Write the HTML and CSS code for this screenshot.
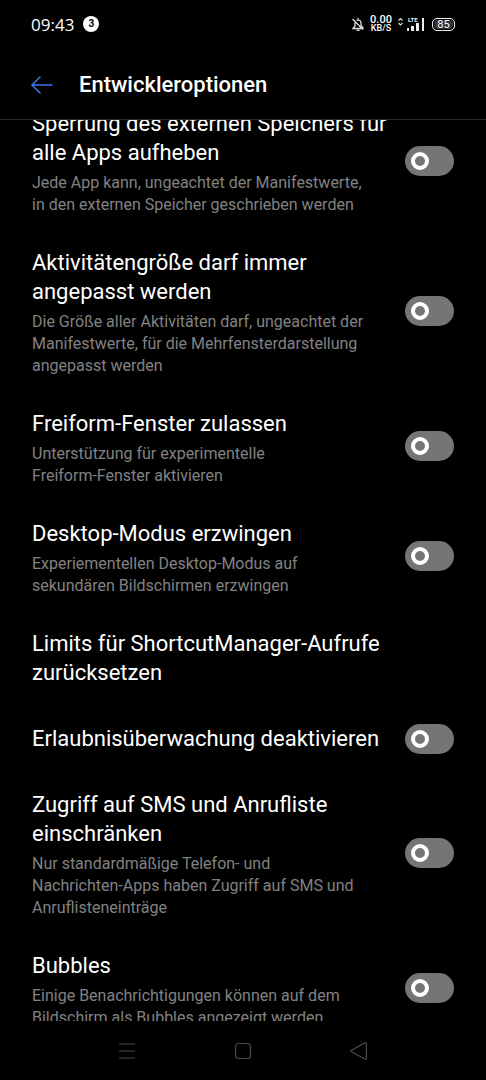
FILE: index.html
```html
<!DOCTYPE html>
<html lang="de">
<head>
    <meta charset="UTF-8">
    <meta name="viewport" content="width=device-width, initial-scale=1.0">
    <title>Entwickleroptionen</title>
    <link rel="stylesheet" href="styles.css">
</head>
<body>
    <div class="status-bar">
        <span class="time">09:43</span>
        <span class="badge">3</span>
        <div class="status-icons">
            <svg class="bell" width="14" height="16" viewBox="0 0 14 16" fill="none" stroke="#ddd" stroke-width="1.3">
                <path d="M7 2v2M4 6.500V10L2 12.500H11M5.500 4.500Q10 3 10 7.500V9.500L12.500 12.500M5.500 14.300h3M1.500 3l10.500 10.500"/>
            </svg>
            <div class="speed">
                <span class="speed-value">0.00</span>
                <span class="speed-unit">KB/S</span>
            </div>
            <svg class="signal" width="28" height="16" viewBox="0 0 28 16" fill="#eee">
                <path d="M1.500 4.500l2-2 2 2M1.500 7l2 2 2-2" fill="none" stroke="#ddd" stroke-width="1.2"/>
                <rect x="10" y="12" width="2" height="3"/>
                <rect x="14" y="10" width="3" height="5"/>
                <rect x="19" y="7" width="3" height="8"/>
                <rect x="25" y="2" width="2" height="13"/>
                <text x="11" y="6" class="lte">LTE</text>
            </svg>
            <span class="battery">85</span>
        </div>
    </div>

    <header class="header">
        <button class="back-button" aria-label="Zurück">
            <svg width="22" height="18" viewBox="0 0 22 18" fill="none" stroke="#3f74e8" stroke-width="1.6" stroke-linecap="round" stroke-linejoin="round">
                <path d="M21 9H1M9 1L1 9l8 8"/>
            </svg>
        </button>
        <h1>Entwickleroptionen</h1>
    </header>

    <main class="content">
        <div class="list">
            <div class="row">
                <label class="text" for="storage">
                    <span class="title">Sperrung des externen Speichers für alle Apps aufheben</span>
                    <span class="desc">Jede App kann, ungeachtet der Manifestwerte,<br>in den externen Speicher geschrieben werden</span>
                </label>
                <input type="checkbox" class="switch" id="storage">
            </div>
            <div class="row">
                <label class="text" for="resize">
                    <span class="title">Aktivitätengröße darf immer angepasst werden</span>
                    <span class="desc">Die Größe aller Aktivitäten darf, ungeachtet der<br>Manifestwerte, für die Mehrfensterdarstellung<br>angepasst werden</span>
                </label>
                <input type="checkbox" class="switch" id="resize">
            </div>
            <div class="row">
                <label class="text" for="freeform">
                    <span class="title">Freiform-Fenster zulassen</span>
                    <span class="desc">Unterstützung für experimentelle<br>Freiform-Fenster aktivieren</span>
                </label>
                <input type="checkbox" class="switch" id="freeform">
            </div>
            <div class="row">
                <label class="text" for="desktop">
                    <span class="title">Desktop-Modus erzwingen</span>
                    <span class="desc">Experiementellen Desktop-Modus auf<br>sekundären Bildschirmen erzwingen</span>
                </label>
                <input type="checkbox" class="switch" id="desktop">
            </div>
            <div class="row">
                <div class="text">
                    <span class="title">Limits für ShortcutManager-Aufrufe<br>zurücksetzen</span>
                </div>
            </div>
            <div class="row">
                <label class="text" for="permission">
                    <span class="title">Erlaubnisüberwachung deaktivieren</span>
                </label>
                <input type="checkbox" class="switch" id="permission">
            </div>
            <div class="row">
                <label class="text" for="sms">
                    <span class="title">Zugriff auf SMS und Anrufliste einschränken</span>
                    <span class="desc">Nur standardmäßige Telefon- und<br>Nachrichten-Apps haben Zugriff auf SMS und<br>Anruflisteneinträge</span>
                </label>
                <input type="checkbox" class="switch" id="sms">
            </div>
            <div class="row">
                <label class="text" for="bubbles">
                    <span class="title">Bubbles</span>
                    <span class="desc">Einige Benachrichtigungen können auf dem<br>Bildschirm als Bubbles angezeigt werden</span>
                </label>
                <input type="checkbox" class="switch" id="bubbles">
            </div>
        </div>
    </main>

    <nav class="nav-bar">
        <button aria-label="Menü">
            <svg width="18" height="18" viewBox="0 0 18 18" fill="none" stroke="#4a4a4a" stroke-width="1.2">
                <path d="M1 2h16M1 9h16M1 16h16"/>
            </svg>
        </button>
        <button aria-label="Startseite">
            <svg width="18" height="18" viewBox="0 0 18 18" fill="none" stroke="#4a4a4a" stroke-width="1.2">
                <rect x="1.500" y="1.500" width="15" height="15" rx="3"/>
            </svg>
        </button>
        <button aria-label="Zurück">
            <svg width="18" height="18" viewBox="0 0 18 18" fill="none" stroke="#4a4a4a" stroke-width="1.2">
                <path d="M14.800 .9Q16.400 0 16.400 1.800V16.200Q16.400 18 14.800 17.100L1.500 9.800Q.2 9 1.500 8.200Z"/>
            </svg>
        </button>
    </nav>
</body>
</html>
```
FILE: styles.css
```css
* {
    box-sizing: border-box;
}

body {
    margin: 0;
    height: 100vh;
    display: flex;
    flex-direction: column;
    background: #000;
    color: #fff;
    font-family: Roboto, sans-serif;
    overflow: hidden;
}

button {
    display: flex;
    padding: 0;
    border: none;
    background: none;
    cursor: pointer;
}

.status-bar {
    display: flex;
    align-items: center;
    height: 48px;
    padding: 0 31px;
    flex-shrink: 0;
}

.time {
    font-family: "Open Sans", sans-serif;
    font-size: 17px;
}

.badge {
    width: 16px;
    height: 16px;
    margin-left: 9px;
    border-radius: 50%;
    background: #fff;
    color: #000;
    font-size: 10px;
    font-weight: bold;
    line-height: 16px;
    text-align: center;
}

.status-icons {
    display: flex;
    align-items: center;
    margin-left: auto;
}

.speed {
    display: flex;
    flex-direction: column;
    align-items: center;
    width: 24px;
    margin: 0 4px;
    font-weight: 500;
}

.speed-value {
    font-size: 11px;
    line-height: 9px;
}

.speed-unit {
    font-size: 9px;
    line-height: 9px;
}

.lte {
    font-size: 6px;
    font-weight: bold;
}

.battery {
    width: 23px;
    height: 13px;
    margin-left: 7px;
    border: 1px solid #eee;
    border-radius: 5px;
    background: #333;
    box-shadow: inset 0 0 0 1px #000;
    font-size: 11px;
    line-height: 12px;
    text-align: center;
}

.header {
    display: flex;
    align-items: center;
    gap: 26px;
    height: 72px;
    padding: 2px 31px 0;
    border-bottom: 1px solid #2c2c2c;
    flex-shrink: 0;
}

h1 {
    margin: 0;
    font-size: 22px;
    font-weight: 500;
}

.content {
    flex: 1;
    min-height: 0;
    overflow: hidden;
}

/* list is scrolled a little, first row runs under the header */
.list {
    margin-top: -29px;
}

.row {
    display: flex;
    align-items: center;
    justify-content: space-between;
    padding: 18px 32px 14px;
}

.text {
    max-width: 358px;
}

.title {
    display: block;
    margin-bottom: 5px;
    font-size: 22px;
    line-height: 29px;
}

.desc {
    display: block;
    color: #828282;
    font-size: 16px;
    line-height: 22px;
}

.switch {
    appearance: none;
    display: flex;
    align-items: center;
    flex-shrink: 0;
    width: 49px;
    height: 30px;
    margin: 0 0 4px;
    padding-left: 6px;
    border-radius: 15px;
    background: #757575;
    cursor: pointer;
}

.switch::before {
    content: "";
    box-sizing: border-box;
    width: 18px;
    height: 18px;
    border: 4px solid #fff;
    border-radius: 50%;
}

.switch:checked {
    padding-left: 25px;
    background: #3f74e8;
}

.nav-bar {
    display: flex;
    align-items: center;
    justify-content: center;
    gap: 98px;
    height: 59px;
    flex-shrink: 0;
}
```
